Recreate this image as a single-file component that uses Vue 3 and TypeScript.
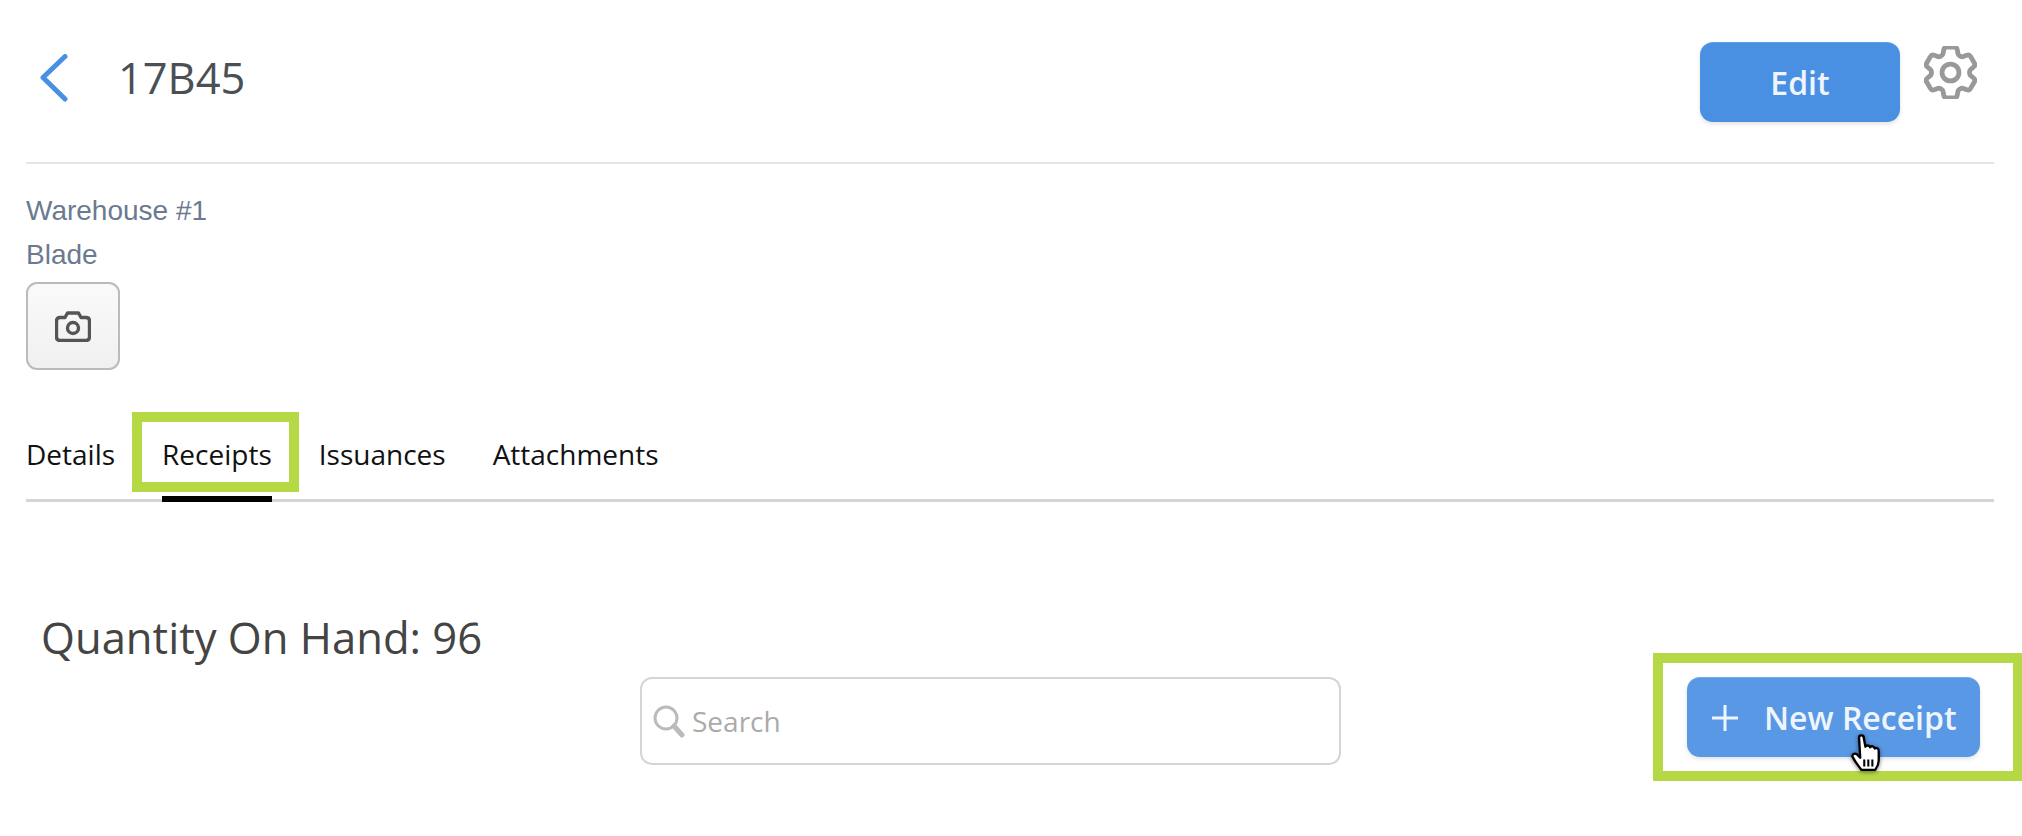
<template>
  <div class="page">
    <header class="header">
      <div class="header-left">
        <svg class="back" viewBox="0 0 28 48" fill="none" stroke="#4a90e2" stroke-width="5" stroke-linecap="round" stroke-linejoin="round">
          <path d="M25 2.5 L3 23.5 L25 45" />
        </svg>
        <h1 class="title">17B45</h1>
      </div>
      <div class="header-right">
        <button class="btn btn-edit">Edit</button>
        <svg class="gear" viewBox="2.6 2.6 18.8 18.8" fill="none" stroke="#999" stroke-width="1.7" stroke-linecap="round" stroke-linejoin="round">
          <path d="M9.594 3.94c.09-.542.56-.94 1.11-.94h2.593c.55 0 1.02.398 1.11.94l.213 1.281c.063.374.313.686.645.87.074.04.147.083.22.127.325.196.72.257 1.075.124l1.217-.456a1.125 1.125 0 0 1 1.37.49l1.296 2.247a1.125 1.125 0 0 1-.26 1.431l-1.003.827c-.293.241-.438.613-.43.992a7.723 7.723 0 0 1 0 .255c-.008.378.137.75.43.991l1.004.827c.424.35.534.955.26 1.43l-1.298 2.247a1.125 1.125 0 0 1-1.369.491l-1.217-.456c-.355-.133-.75-.072-1.076.124a6.47 6.47 0 0 1-.22.128c-.331.183-.581.495-.644.869l-.213 1.281c-.09.543-.56.94-1.11.94h-2.594c-.55 0-1.019-.398-1.11-.94l-.213-1.281c-.062-.374-.312-.686-.644-.87a6.52 6.52 0 0 1-.22-.127c-.325-.196-.72-.257-1.076-.124l-1.217.456a1.125 1.125 0 0 1-1.369-.49l-1.297-2.247a1.125 1.125 0 0 1 .26-1.431l1.004-.827c.292-.24.437-.613.43-.991a6.932 6.932 0 0 1 0-.255c.007-.38-.138-.751-.43-.992l-1.004-.827a1.125 1.125 0 0 1-.26-1.43l1.297-2.247a1.125 1.125 0 0 1 1.37-.491l1.216.456c.356.133.751.072 1.076-.124.072-.044.146-.086.22-.128.332-.183.582-.495.644-.869l.214-1.28Z" />
          <path d="M15 12a3 3 0 1 1-6 0 3 3 0 0 1 6 0Z" />
        </svg>
      </div>
    </header>

    <section class="meta">
      <div class="meta-line">Warehouse #1</div>
      <div class="meta-line">Blade</div>
      <button class="photo-btn">
        <svg viewBox="0 0 36 31" width="36" height="31" fill="none" stroke="#555" stroke-width="3.4" stroke-linejoin="round">
          <path d="M5 6.5 H10 L12.5 2 H23.5 L26 6.5 H31 Q34.5 6.5 34.5 10 V26 Q34.5 29.5 31 29.5 H5 Q1.5 29.5 1.5 26 V10 Q1.5 6.5 5 6.5 Z" />
          <circle cx="18" cy="17" r="5.5" />
        </svg>
      </button>
    </section>

    <nav class="tabs">
      <div v-for="tab in tabs" :key="tab" class="tab" :class="{ active: tab === activeTab }">
        {{ tab }}
        <span v-if="tab === activeTab" class="mark mark-tab"></span>
      </div>
    </nav>

    <section class="content">
      <h2 class="qty">Quantity On Hand: {{ quantity }}</h2>
      <div class="toolbar">
        <div class="search">
          <svg class="search-icon" viewBox="0 0 32 33" fill="none" stroke="#bbb" stroke-linecap="round">
            <circle cx="13" cy="13" r="11" stroke-width="3" />
            <path d="M21 21 L29 30" stroke-width="5" />
          </svg>
          <span class="search-text">Search</span>
        </div>
        <button class="btn btn-new">
          <svg class="plus" viewBox="0 0 26 26" stroke="#eef5fd" stroke-width="3">
            <path d="M13 0 V26 M0 13 H26" />
          </svg>
          New Receipt
          <span class="mark mark-new"></span>
          <svg class="hand" viewBox="0 0 26 32">
            <path d="M7 3 C7 0.5 11 0.5 11 3 L12.5 11 C13 9.5 16 9.5 16.5 11.5 C17.5 10 20 10.5 20.5 12.5 C22 11.5 24 12.5 24 14.5 L24 23 C24 27 22.5 29 21 31 L9 31 C7 28 4 25 1.5 20 C0.5 18 3 16 5 17.5 L8 20.5 Z" fill="#fff" stroke="#000" stroke-width="2" stroke-linejoin="round" />
            <path d="M11.5 22 V28 M15 22 V28 M18.5 22 V28" stroke="#000" stroke-width="1.8" fill="none" />
          </svg>
        </button>
      </div>
    </section>
  </div>
</template>

<script setup lang="ts">
const tabs: string[] = ['Details', 'Receipts', 'Issuances', 'Attachments']
const activeTab = 'Receipts'
const quantity = 96
</script>

<style>
html,
body {
  margin: 0;
  background: #fff;
}
</style>

<style scoped>
.page {
  width: 2022px;
  height: 836px;
  box-sizing: border-box;
  padding: 0 28px 0 26px;
  font-family: "Open Sans", sans-serif;
  overflow: hidden;
}

.header {
  height: 164px;
  box-sizing: border-box;
  border-bottom: 2px solid #e5e5e5;
  display: flex;
  justify-content: space-between;
  align-items: flex-start;
}

.header-left {
  display: flex;
  align-items: center;
  padding-top: 52px;
}

.back {
  width: 28px;
  height: 48px;
  margin-left: 14px;
}

.title {
  margin: 0 0 0 50px;
  font-size: 43.4px;
  font-weight: 400;
  line-height: 52px;
  color: #4a5055;
}

.header-right {
  display: flex;
  align-items: flex-start;
  padding-top: 42px;
  margin-right: 17px;
}

.gear {
  width: 53px;
  height: 53px;
  margin: 4px 0 0 24px;
}

.btn {
  border: none;
  border-top: 1px solid rgba(255, 255, 255, 0.15);
  color: #eef5fd;
  font-family: inherit;
  font-weight: 600;
  border-radius: 13px;
  padding: 0;
  box-shadow: 0 2px 4px rgba(0, 0, 0, 0.12);
}

.btn-edit {
  width: 200px;
  height: 80px;
  background: #4a90e2;
  font-size: 32px;
}

.meta {
  padding-top: 25px;
}

.meta-line {
  font-family: "Liberation Sans", Arial, sans-serif;
  font-size: 28px;
  line-height: 44px;
  color: #6b7a90;
}

.photo-btn {
  display: flex;
  align-items: center;
  justify-content: center;
  width: 94px;
  height: 88px;
  margin-top: 5px;
  padding: 0;
  border: 2px solid #bbb;
  border-radius: 11px;
  background: linear-gradient(#fafafa, #f0f0f0);
}

.tabs {
  display: flex;
  gap: 47px;
  margin-top: 41px;
  height: 88px;
  border-bottom: 3px solid #d5d5d5;
}

.tab {
  position: relative;
  font-size: 28px;
  line-height: 86px;
  color: #111;
}

.tab.active::after {
  content: "";
  position: absolute;
  left: 0;
  right: 0;
  bottom: -3px;
  height: 6px;
  background: #000;
}

.mark {
  position: absolute;
  box-sizing: border-box;
  border: 10px solid #b5d944;
  pointer-events: none;
}

.mark-tab {
  left: -30px;
  right: -27px;
  top: 1px;
  height: 80px;
}

.content {
  padding: 0 0 0 15px;
}

.qty {
  margin: 105px 0 0;
  font-size: 43.6px;
  font-weight: 400;
  line-height: 60px;
  color: #444;
}

.toolbar {
  display: flex;
  align-items: flex-start;
  margin-top: 10px;
  margin-left: 599px;
}

.search {
  width: 701px;
  height: 88px;
  box-sizing: border-box;
  border: 2px solid #d5d5d5;
  border-radius: 12px;
  display: flex;
  align-items: center;
  padding-left: 11px;
}

.search-icon {
  width: 32px;
  height: 33px;
}

.search-text {
  margin-left: 7px;
  font-size: 28px;
  color: #aaa;
}

.btn-new {
  position: relative;
  display: flex;
  align-items: center;
  width: 293px;
  height: 80px;
  margin-left: 346px;
  padding-left: 25px;
  box-sizing: border-box;
  background: #5898e4;
  font-size: 32px;
}

.plus {
  width: 26px;
  height: 26px;
  margin-right: 26px;
}

.mark-new {
  left: -34px;
  top: -25px;
  width: 370px;
  height: 128px;
}

.hand {
  position: absolute;
  left: 163px;
  top: 56px;
  width: 32px;
  height: 37px;
  filter: drop-shadow(0 1px 2px rgba(0, 0, 0, 0.5));
}
</style>
